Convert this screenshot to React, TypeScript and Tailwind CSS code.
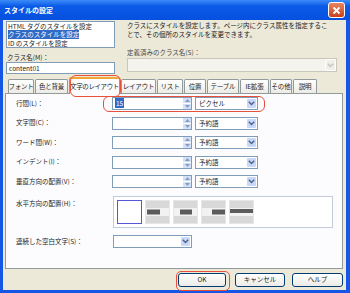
import React from "react";

const Chevron = ({ color = "#4D6185" }: { color?: string }) => (
  <svg width="7" height="5" viewBox="0 0 7 5">
    <path d="M0.8 0.8 L3.5 3.6 L6.2 0.8" fill="none" stroke={color} strokeWidth="1.4" />
  </svg>
);

const Combo = ({ value = "", className = "", disabled = false }: { value?: string; className?: string; disabled?: boolean }) => (
  <div
    className={`flex items-center border ${disabled ? "border-[#C9C7BA] bg-[#F4F3EE]" : "border-[#7F9DB9] bg-white"} ${className}`}
  >
    <div className="flex-1 pl-[3px] leading-[11px] whitespace-nowrap">{value}</div>
    <div
      className={`w-[11px] h-full flex items-center justify-center border border-white rounded-[2px] ${disabled ? "bg-[#F0EFE8]" : "bg-[#C8D8FB]"}`}
    >
      <Chevron color={disabled ? "#C5C4BC" : "#4D6185"} />
    </div>
  </div>
);

const Spin = () => (
  <div className="w-[9px] h-full flex flex-col border-l border-white">
    <div className="flex-1 bg-[#D3E0FA] flex items-center justify-center border-b border-white">
      <svg width="5" height="3" viewBox="0 0 5 3"><path d="M0 3 L2.5 0 L5 3Z" fill="#8A9BBD" /></svg>
    </div>
    <div className="flex-1 bg-[#D3E0FA] flex items-center justify-center">
      <svg width="5" height="3" viewBox="0 0 5 3"><path d="M0 0 L2.5 3 L5 0Z" fill="#8A9BBD" /></svg>
    </div>
  </div>
);

const SpinRow = ({ label, value, unit, mark }: { label: string; value?: string; unit: string; mark?: boolean }) => (
  <div className="relative flex items-center h-[19.5px]">
    <div className="w-[96px] whitespace-nowrap">{label}</div>
    <div className="flex items-center h-[13px] w-[80px] border border-[#7F9DB9] bg-white">
      <div className="flex-1 pl-[2px] leading-[11px]">
        {value && <span className="bg-[#316AC5] text-white px-[1px]">{value}</span>}
      </div>
      <Spin />
    </div>
    <Combo value={unit} className="ml-[3px] w-[63px] h-[13px]" />
    {mark && (
      <div className="absolute left-[87px] top-[2px] w-[162px] h-[16px] border-[1.5px] border-[#E8503A] rounded-[6px]" />
    )}
  </div>
);

const AlignBtn = ({ kind }: { kind: "none" | "left" | "center" | "right" | "justify" }) => {
  if (kind === "none") return <div className="w-[25px] h-[24px] bg-white border border-[#5656D8]" />;
  const bar = { left: [1, 13], center: [6, 12], right: [10, 13], justify: [0, 23] }[kind];
  return (
    <div className="w-[25px] h-[24px] border border-[#E6E6E6] bg-[#D8D8D8]">
      <svg width="23" height="22" viewBox="0 0 23 22">
        <rect x="0" y="7" width="23" height="8" fill="#F2F2F2" />
        <rect x={bar[0]} y={kind === "justify" ? 8 : 8.5} width={bar[1]} height={kind === "justify" ? 4 : 5} fill="#5C5C5C" />
      </svg>
    </div>
  );
};

const tabs: [string, number][] = [
  ["フォント", 26],
  ["色と背景", 33],
  ["文字のレイアウト", 51],
  ["レイアウト", 35],
  ["リスト", 26],
  ["位置", 22],
  ["テーブル", 32],
  ["IE拡張", 29],
  ["その他", 22],
  ["説明", 24],
];

const XpButton = ({ children, className = "" }: { children: React.ReactNode; className?: string }) => (
  <div
    className={`relative h-[14px] flex items-center justify-center border border-[#003C74] rounded-[3px] bg-linear-to-b from-white to-[#ECEBE6] ${className}`}
  >
    {children}
  </div>
);

export default function App() {
  return (
    <div className="w-[350px] h-[293px] bg-[#1656E6] flex flex-col font-['Noto_Sans_CJK_JP',sans-serif] text-[6.5px] text-[#222]">
      {/* title bar */}
      <div className="h-[20px] flex items-center justify-between pl-[4px] pr-[5px] bg-linear-to-b from-[#3B8CF8] via-[#0B5BE8] via-30% to-[#0650DE]">
        <span className="text-white font-bold text-[7px]">スタイルの設定</span>
        <div className="w-[17px] h-[16px] rounded-[3px] border border-white bg-linear-to-b from-[#E9845F] to-[#C8401A] flex items-center justify-center">
          <svg width="9" height="9" viewBox="0 0 9 9">
            <path d="M1.5 1.5 L7.5 7.5 M7.5 1.5 L1.5 7.5" stroke="white" strokeWidth="1.8" />
          </svg>
        </div>
      </div>

      {/* body */}
      <div className="ml-[3px] w-[343px] h-[270px] bg-[#ECE9D8] flex flex-col">
        <div className="flex h-[54px]">
          <div className="ml-[3px] w-[109px] flex flex-col">
            <div className="mt-[1px] h-[27px] border border-[#7F9DB9] bg-white pl-[1px] flex flex-col justify-center">
              <div className="h-[8.5px] leading-[8.5px] whitespace-nowrap">HTML タグのスタイルを設定</div>
              <div className="h-[8.5px] leading-[8.5px] whitespace-nowrap">
                <span className="bg-[#316AC5] text-white inline-block">クラスのスタイルを設定</span>
              </div>
              <div className="h-[8.5px] leading-[8.5px] whitespace-nowrap">ID のスタイルを設定</div>
            </div>
            <div className="mt-[5px] h-[8px] leading-[8px] pl-[1px]">クラス名(M)：</div>
            <div className="mt-[1px] h-[12px] border border-[#7F9DB9] bg-white pl-[2px] leading-[10px]">content01</div>
          </div>
          <div className="ml-[12px] w-[210px] flex flex-col">
            <div className="mt-[1px] leading-[8.5px] whitespace-nowrap">
              <div>クラスにスタイルを設定します。ページ内にクラス属性を指定するこ</div>
              <div>とで、その個所のスタイルを変更できます。</div>
            </div>
            <div className="mt-[10px] h-[8px] leading-[8px] text-[#444]">定義済みのクラス名(S)：</div>
            <Combo disabled className="mt-[2px] h-[14px] w-[210px]" />
          </div>
        </div>

        {/* tabs */}
        <div className="ml-[5px] h-[19px] flex items-end gap-[1px] relative z-10">
          {tabs.map(([t, w], i) =>
            i === 2 ? (
              <div
                key={t}
                style={{ width: w }}
                className="relative h-[17px] -mb-[1px] bg-[#FCFCFE] border border-b-0 border-[#919B9C] border-t-[2px] border-t-[#F3A636] rounded-t-[2px] flex items-center justify-center whitespace-nowrap tracking-[-0.4px]"
              >
                {t}
                <div className="absolute left-[0px] -top-[4px] w-[51px] h-[22px] border-[1.5px] border-[#E8503A] rounded-[6px]" />
              </div>
            ) : (
              <div
                key={t}
                style={{ width: w }}
                className="h-[14px] bg-linear-to-b from-white to-[#ECEBE5] border border-b-0 border-[#919B9C] rounded-t-[2px] flex items-center justify-center whitespace-nowrap tracking-[-0.2px]"
              >
                {t}
              </div>
            )
          )}
        </div>

        {/* panel */}
        <div className="ml-[2px] w-[338px] h-[176px] border border-[#919B9C] bg-[#FCFCFE] pl-[10px] flex flex-col">
          <SpinRow label="行間(L)：" value="15" unit="ピクセル" mark />
          <SpinRow label="文字間(C)：" unit="予約語" />
          <SpinRow label="ワード間(W)：" unit="予約語" />
          <SpinRow label="インデント(I)：" unit="予約語" />
          <SpinRow label="垂直方向の配置(V)：" unit="予約語" />
          <div className="flex mt-[4px]">
            <div className="w-[96px] pt-[3px] leading-[8px]">水平方向の配置(H)：</div>
            <div className="ml-[1px] w-[220px] h-[32px] border border-[#C4CBD8] bg-white p-[3px] flex gap-[3px]">
              <AlignBtn kind="none" />
              <AlignBtn kind="left" />
              <AlignBtn kind="center" />
              <AlignBtn kind="right" />
              <AlignBtn kind="justify" />
            </div>
          </div>
          <div className="flex items-center mt-[7px] h-[14px]">
            <div className="w-[97px]">連続した空白文字(S)：</div>
            <Combo className="w-[79px] h-[13px]" />
          </div>
        </div>

        {/* buttons */}
        <div className="mt-[4px] flex justify-end pr-[3px]">
          <XpButton className="w-[48px]">
            OK
            <div className="absolute -left-[3px] -top-[3px] w-[54px] h-[20px] border-[1.5px] border-[#E8503A] rounded-[5px]" />
          </XpButton>
          <XpButton className="w-[50px] ml-[9px]">キャンセル</XpButton>
          <XpButton className="w-[51px] ml-[7px]">ヘルプ</XpButton>
        </div>
      </div>
    </div>
  );
}
